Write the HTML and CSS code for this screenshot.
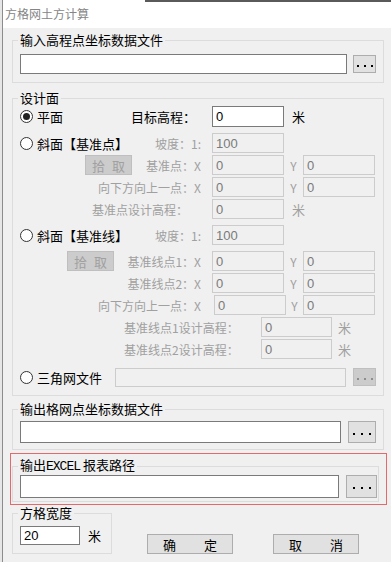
FILE: index.html
```html
<!DOCTYPE html>
<html lang="zh-CN">
<head>
    <meta charset="UTF-8">
    <meta name="viewport" content="width=device-width, initial-scale=1.0">
    <title>方格网土方计算</title>
    <link rel="stylesheet" href="styles.css">
</head>
<body>
    <div class="window">
        <div class="titlebar">方格网土方计算</div>

        <!-- 输入文件 -->
        <fieldset class="group group-in">
            <legend>输入高程点坐标数据文件</legend>
            <div class="file-row">
                <input class="text file-in" type="text">
                <button class="browse"><i></i><i></i><i></i></button>
            </div>
        </fieldset>

        <!-- 设计面 -->
        <fieldset class="group group-design">
            <legend>设计面</legend>

            <div class="row row-first">
                <div class="lead">
                    <span class="radio"><span class="dot on"></span>平面</span>
                    <span class="cap cap-goal">目标高程：</span>
                </div>
                <input class="text small" type="text" value="0">
                <span class="unit">米</span>
            </div>

            <div class="row gap-lg">
                <div class="lead">
                    <span class="radio"><span class="dot"></span>斜面【基准点】</span>
                    <span class="cap off">坡度：1:</span>
                </div>
                <input class="text small" type="text" value="100" disabled>
            </div>

            <div class="row">
                <div class="lead">
                    <button class="pick pick-a" disabled><span>拾</span><span>取</span></button>
                    <span class="cap off">基准点：X</span>
                </div>
                <input class="text small" type="text" value="0" disabled>
                <span class="ylabel off">Y</span>
                <input class="text small" type="text" value="0" disabled>
            </div>

            <div class="row">
                <div class="lead">
                    <span class="cap off">向下方向上一点：X</span>
                </div>
                <input class="text small" type="text" value="0" disabled>
                <span class="ylabel off">Y</span>
                <input class="text small" type="text" value="0" disabled>
            </div>

            <div class="row">
                <div class="lead">
                    <span class="cap cap-left off">基准点设计高程：</span>
                </div>
                <input class="text small" type="text" value="0" disabled>
                <span class="unit off">米</span>
            </div>

            <div class="row gap-lg">
                <div class="lead">
                    <span class="radio"><span class="dot"></span>斜面【基准线】</span>
                    <span class="cap off">坡度：1:</span>
                </div>
                <input class="text small" type="text" value="100" disabled>
            </div>

            <div class="row gap-lg">
                <div class="lead">
                    <button class="pick pick-b" disabled><span>拾</span><span>取</span></button>
                    <span class="cap off">基准线点1：X</span>
                </div>
                <input class="text small" type="text" value="0" disabled>
                <span class="ylabel off">Y</span>
                <input class="text small" type="text" value="0" disabled>
            </div>

            <div class="row">
                <div class="lead">
                    <span class="cap off">基准线点2：X</span>
                </div>
                <input class="text small" type="text" value="0" disabled>
                <span class="ylabel off">Y</span>
                <input class="text small" type="text" value="0" disabled>
            </div>

            <div class="row">
                <div class="lead">
                    <span class="cap off">向下方向上一点：X</span>
                </div>
                <input class="text small nudge" type="text" value="0" disabled>
                <span class="ylabel ylabel-narrow off">Y</span>
                <input class="text small" type="text" value="0" disabled>
            </div>

            <div class="row">
                <div class="lead lead-wide">
                    <span class="cap cap-left2 off">基准线点1设计高程：</span>
                </div>
                <input class="text mid" type="text" value="0" disabled>
                <span class="unit off">米</span>
            </div>

            <div class="row">
                <div class="lead lead-wide">
                    <span class="cap cap-left2 off">基准线点2设计高程：</span>
                </div>
                <input class="text mid" type="text" value="0" disabled>
                <span class="unit off">米</span>
            </div>

            <div class="row row-tin">
                <span class="radio"><span class="dot"></span>三角网文件</span>
                <input class="text tin" type="text" disabled>
                <button class="browse browse-sm" disabled><i></i><i></i><i></i></button>
            </div>
        </fieldset>

        <!-- 输出格网点 -->
        <fieldset class="group group-out">
            <legend>输出格网点坐标数据文件</legend>
            <div class="file-row">
                <input class="text file-out" type="text">
                <button class="browse browse-lg"><i></i><i></i><i></i></button>
            </div>
        </fieldset>

        <!-- 输出EXCEL -->
        <div class="highlight">
            <fieldset class="group group-excel">
                <legend>输出<span class="latin">EXCEL</span> 报表路径</legend>
                <div class="file-row">
                    <input class="text file-excel" type="text">
                    <button class="browse browse-xl"><i></i><i></i><i></i></button>
                </div>
            </fieldset>
        </div>

        <div class="bottom">
            <fieldset class="group group-size">
                <legend>方格宽度</legend>
                <div class="size-row">
                    <input class="text size" type="text" value="20">
                    <span class="unit">米</span>
                </div>
            </fieldset>
            <button class="btn btn-ok"><span>确</span><span>定</span></button>
            <button class="btn btn-cancel"><span>取</span><span>消</span></button>
        </div>
    </div>
</body>
</html>
```

FILE: styles.css
```css
body {
    margin: 0;
    padding-left: 2px;
    height: 562px;
    overflow: hidden;
    background-color: #e6e6e6;
    font-family: "Noto Sans CJK SC", sans-serif;
    font-size: 13px;
    color: #000000;
}
.window {
    height: 562px;
    background-color: #f0f0f0;
    border-left: 1px solid #8c8c8c;
}
.titlebar {
    height: 28px;
    line-height: 28px;
    padding-left: 2px;
    font-size: 12px;
    color: #858585;
    background: linear-gradient(#5a5a5a, #5a5a5a) no-repeat 142px 0 / 100% 2px, #ffffff;
}

/* group boxes */
.group {
    border: 1px solid #dcdcdc;
    padding: 0 7px;
    min-width: 0;
}
.group legend {
    padding: 0 2px;
    margin-left: -2px;
    line-height: 16px;
    font-size: 13px;
}
.group-in {
    margin: 4px 7px 0 9px;
    padding-top: 6px;
    padding-bottom: 8px;
}
.group-design {
    margin: 7px 7px 0 9px;
    padding-bottom: 8px;
}
.group-out {
    margin: 5px 7px 0 9px;
    padding-top: 4px;
    padding-bottom: 6px;
}
.highlight {
    margin: 3px 4px 0 7px;
    padding: 4px 0 2px;
    border: 1px solid #e26a6a;
}
.group-excel {
    margin: 0 7px 0 1px;
    padding: 1px 1px 3px 7px;
}
.group-excel legend {
    line-height: 14px;
}
.latin {
    font-family: "Liberation Mono", monospace;
    font-size: 13px;
    letter-spacing: -1px;
}

/* inputs */
.text {
    box-sizing: border-box;
    height: 20px;
    margin: 0;
    padding: 0 3px;
    border: 1px solid #7a7a7a;
    background-color: #ffffff;
    font-family: "Liberation Sans", "Noto Sans CJK SC", sans-serif;
    font-size: 13px;
    color: #000000;
    outline: none;
}
.text:disabled {
    border-color: #cccccc;
    background-color: #f0f0f0;
    color: #7a7a7a;
}
.file-row {
    display: flex;
    align-items: center;
}
.file-in {
    flex: 1;
    margin-right: 6px;
}
.file-out {
    flex: 1;
    height: 22px;
    margin-right: 7px;
}
.file-excel {
    flex: 1;
    height: 23px;
    margin-right: 7px;
}

/* browse buttons */
.browse {
    box-sizing: border-box;
    width: 23px;
    height: 18px;
    padding: 3px 0 0;
    border: 1px solid #adadad;
    background-color: #e1e1e1;
    display: flex;
    justify-content: center;
    align-items: center;
    gap: 5px;
}
.browse i {
    width: 2px;
    height: 2px;
    background-color: #000000;
}
.browse:disabled {
    background-color: #cccccc;
    border-color: #bfbfbf;
}
.browse:disabled i {
    background-color: #8d8d8d;
}
.browse-lg {
    width: 28px;
    height: 22px;
    gap: 6px;
}
.browse-xl {
    width: 31px;
    height: 23px;
    gap: 6px;
}

/* design rows */
.row {
    display: flex;
    align-items: center;
    height: 20px;
    margin-top: 2px;
}
.row-first {
    height: 21px;
    margin-top: 0;
}
.row-first .text {
    height: 21px;
}
.row.gap-lg {
    margin-top: 6px;
}
.lead {
    width: 181px;
    margin-right: 11px;
    display: flex;
    align-items: center;
    white-space: nowrap;
}
.lead-wide {
    width: 230px;
}
.radio {
    display: flex;
    align-items: center;
    white-space: nowrap;
}
.dot {
    box-sizing: border-box;
    width: 13px;
    height: 13px;
    margin-right: 4px;
    border: 1px solid #333333;
    border-radius: 50%;
    background-color: #ffffff;
    display: flex;
    justify-content: center;
    align-items: center;
}
.dot.on::after {
    content: "";
    width: 7px;
    height: 7px;
    border-radius: 50%;
    background-color: #222222;
}
.cap {
    margin-left: auto;
    font-size: 12px;
    white-space: nowrap;
}
.cap-goal {
    font-size: 13px;
    margin-right: 5px;
}
.cap-left {
    margin-left: 72px;
}
.cap-left2 {
    margin-left: 104px;
}
.off {
    color: #a0a0a0;
}
.small {
    width: 72px;
}
.mid {
    width: 71px;
}
.nudge {
    margin-left: 2px;
}
.ylabel {
    width: 19px;
    text-align: center;
    font-size: 12px;
}
.ylabel-narrow {
    width: 17px;
}
.unit {
    margin-left: 8px;
}
.mid + .unit {
    margin-left: 6px;
}
.pick {
    box-sizing: border-box;
    width: 47px;
    height: 20px;
    padding: 0;
    border: 1px solid #bfbfbf;
    background-color: #cccccc;
    color: #a0a0a0;
    font-family: inherit;
    font-size: 13px;
    display: flex;
    justify-content: center;
    align-items: center;
    gap: 7px;
}
.pick-a {
    margin-left: 65px;
}
.pick-b {
    margin-left: 47px;
}
.row-tin {
    margin-top: 8px;
}
.tin {
    width: 231px;
    height: 19px;
    margin-left: auto;
    margin-right: 7px;
}

/* bottom */
.bottom {
    display: flex;
    align-items: flex-end;
    margin-left: 9px;
}
.group-size {
    box-sizing: border-box;
    width: 100px;
    margin: 0;
    padding-top: 5px;
    padding-bottom: 8px;
}
.size-row {
    display: flex;
    align-items: center;
}
.size {
    width: 60px;
    height: 19px;
}
.btn {
    box-sizing: border-box;
    width: 86px;
    height: 20px;
    padding: 0;
    border: 1px solid #adadad;
    background-color: #e1e1e1;
    font-family: inherit;
    font-size: 13px;
    color: #000000;
    display: flex;
    justify-content: center;
    align-items: center;
    gap: 28px;
}
.btn-ok {
    margin-left: 35px;
}
.btn-cancel {
    margin-left: 40px;
}
```
